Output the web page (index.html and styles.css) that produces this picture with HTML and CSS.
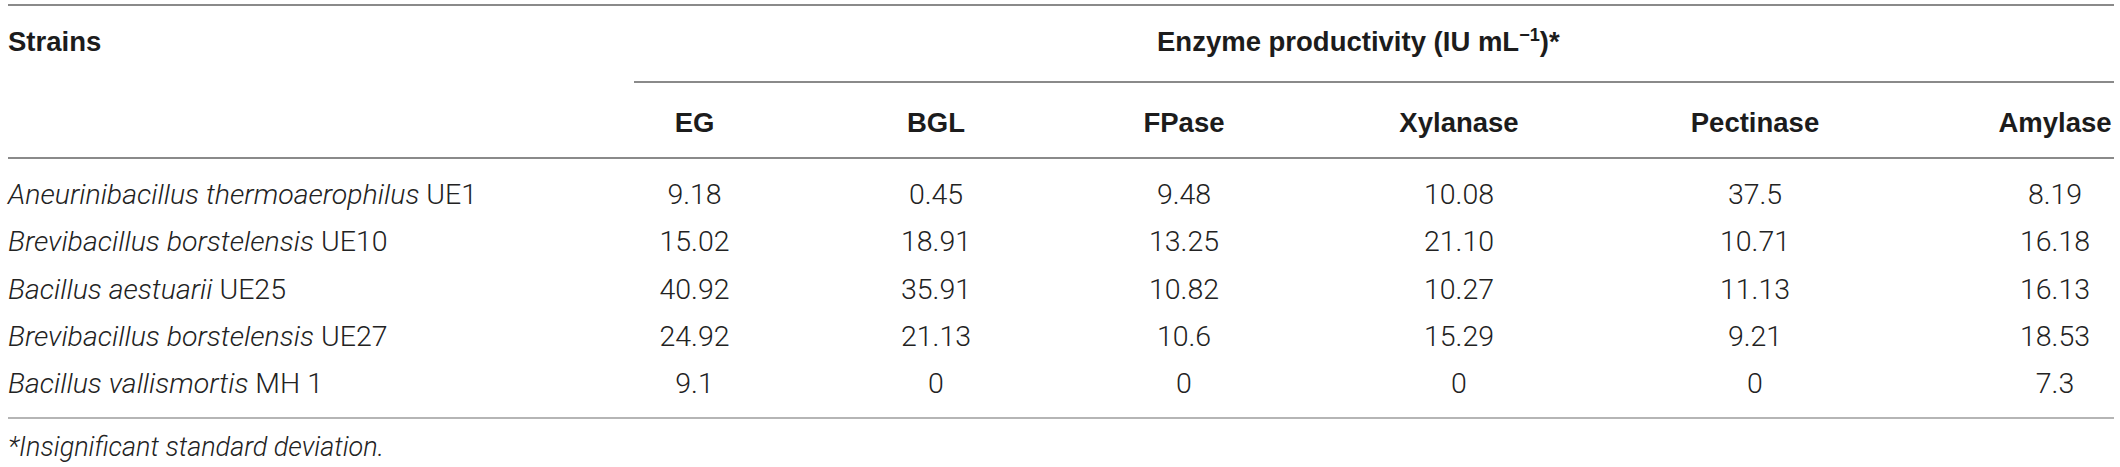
FILE: index.html
```html
<!DOCTYPE html>
<html lang="en">
<head>
<meta charset="utf-8">
<title>Enzyme productivity</title>
<link rel="stylesheet" href="styles.css">
</head>
<body>
<div class="tbl">
  <div class="head-top">
    <div class="strain-head th">Strains</div>
    <div class="span-head th">Enzyme productivity (IU mL<sup>−1</sup>)*</div>
  </div>
  <div class="row head-sub">
    <div class="cell first"></div>
    <div class="cell th">EG</div>
    <div class="cell th">BGL</div>
    <div class="cell th">FPase</div>
    <div class="cell th">Xylanase</div>
    <div class="cell th">Pectinase</div>
    <div class="cell th">Amylase</div>
  </div>
  <div class="tbody">
    <div class="row data">
      <div class="cell first"><i>Aneurinibacillus thermoaerophilus</i> UE1</div>
      <div class="cell">9.18</div>
      <div class="cell">0.45</div>
      <div class="cell">9.48</div>
      <div class="cell">10.08</div>
      <div class="cell">37.5</div>
      <div class="cell">8.19</div>
    </div>
    <div class="row data">
      <div class="cell first"><i>Brevibacillus borstelensis</i> UE10</div>
      <div class="cell">15.02</div>
      <div class="cell">18.91</div>
      <div class="cell">13.25</div>
      <div class="cell">21.10</div>
      <div class="cell">10.71</div>
      <div class="cell">16.18</div>
    </div>
    <div class="row data">
      <div class="cell first"><i>Bacillus aestuarii</i> UE25</div>
      <div class="cell">40.92</div>
      <div class="cell">35.91</div>
      <div class="cell">10.82</div>
      <div class="cell">10.27</div>
      <div class="cell">11.13</div>
      <div class="cell">16.13</div>
    </div>
    <div class="row data">
      <div class="cell first"><i>Brevibacillus borstelensis</i> UE27</div>
      <div class="cell">24.92</div>
      <div class="cell">21.13</div>
      <div class="cell">10.6</div>
      <div class="cell">15.29</div>
      <div class="cell">9.21</div>
      <div class="cell">18.53</div>
    </div>
    <div class="row data">
      <div class="cell first"><i>Bacillus vallismortis</i> MH 1</div>
      <div class="cell">9.1</div>
      <div class="cell">0</div>
      <div class="cell">0</div>
      <div class="cell">0</div>
      <div class="cell">0</div>
      <div class="cell">7.3</div>
    </div>
  </div>
</div>
<p class="note"><i>*Insignificant standard deviation.</i></p>
</body>
</html>
```

FILE: styles.css
```css
html, body {
  overflow: hidden;
}

body {
  margin: 0;
  background: #ffffff;
  font-family: Roboto, "Liberation Sans", Arial, sans-serif;
  font-weight: 300;
  font-size: 28.5px;
  color: #222222;
}

.tbl {
  margin: 4px 0 0 8px;
  width: 2106px;
  border-top: 2px solid #8a8a8a;
  border-bottom: 2px solid #b5b5b5;
}

.th {
  font-family: "Liberation Sans", Arial, sans-serif;
  font-size: 27.5px;
  font-weight: bold;
  color: #1c1c1c;
}

.head-top {
  display: flex;
  line-height: 32px;
}

.strain-head {
  width: 626px;
  padding-top: 20px;
}

.span-head {
  flex: 1;
  padding: 20px 0 23px 523px;
  text-align: left;
  white-space: nowrap;
  border-bottom: 2px solid #8a8a8a;
}

.span-head sup {
  font-size: 0.66em;
  line-height: 0;
  vertical-align: 0.55em;
}

.row {
  display: grid;
  grid-template-columns: 489px 395px 88px 408px 142px 450px 150px;
}

.cell {
  text-align: center;
  white-space: nowrap;
}

.cell.first {
  text-align: left;
}

.head-sub {
  line-height: 32px;
  padding: 24px 0 18px;
  border-bottom: 2px solid #8a8a8a;
}

.tbody {
  padding: 12px 0 10px;
}

.data {
  line-height: 47.25px;
}

.note {
  margin: 12px 0 0 8px;
  font-size: 27px;
  line-height: 32px;
}
```
